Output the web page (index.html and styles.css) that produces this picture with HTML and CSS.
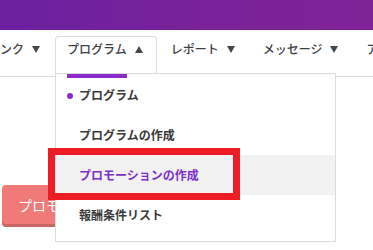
FILE: index.html
```html
<!DOCTYPE html>
<html lang="ja">
<head>
<meta charset="utf-8">
<link rel="stylesheet" href="styles.css">
</head>
<body>
<div class="page">
  <header class="topbar"></header>
  <nav class="nav">
    <div class="nav-item first">ンク<span class="caret down"></span></div>
    <div class="nav-item active">プログラム<span class="caret up"></span>
      <span class="tab-bar"></span>
      <ul class="dropdown">
        <li class="dd-item current"><span class="dot"></span>プログラム</li>
        <li class="dd-item">プログラムの作成</li>
        <li class="dd-item hover">プロモーションの作成</li>
        <li class="dd-item">報酬条件リスト</li>
      </ul>
    </div>
    <div class="nav-item">レポート<span class="caret down"></span></div>
    <div class="nav-item">メッセージ<span class="caret down"></span></div>
    <div class="nav-item">アカウント</div>
  </nav>
  <main class="content">
    <button class="btn">プロモーション作成</button>
  </main>
  <div class="annotation"></div>
</div>
</body>
</html>
```

FILE: styles.css
```css
* { box-sizing: border-box; }
html, body { margin: 0; padding: 0; background: #fff; }
body {
  font-family: "Noto Sans CJK JP", "Noto Sans", sans-serif;
  font-size: 12px;
  color: #3d4043;
}
.page {
  position: relative;
  width: 373px;
  height: 250px;
  overflow: hidden;
}
.topbar {
  height: 30px;
  background: linear-gradient(90deg, #6b20a0 0%, #7a2299 60%, #7f2398 100%);
}
.nav {
  display: flex;
  align-items: flex-start;
  height: 47px;
  border-bottom: 1px solid #dcdcdc;
  white-space: nowrap;
}
.nav-item {
  position: relative;
  flex: none;
  margin-top: 6px;
  padding: 0 13px 13px;
  line-height: 24px;
  border: 1px solid transparent;
  border-bottom: 0;
  font-weight: 500;
  color: #3d4043;
}
.nav-item.first {
  margin-left: -14px;
  padding-right: 14px;
}
.nav-item.active {
  padding-left: 11px;
  background: #fff;
  border-color: #dcdcdc;
  border-radius: 4px 4px 0 0;
  z-index: 3;
}
.caret {
  display: inline-block;
  width: 0;
  height: 0;
  margin-left: 8px;
  vertical-align: 1px;
  border-left: 4px solid transparent;
  border-right: 4px solid transparent;
}
.caret.down { border-top: 7px solid #44474a; }
.caret.up { border-bottom: 7px solid #44474a; }
.tab-bar {
  position: absolute;
  left: 11px;
  top: 37px;
  width: 60px;
  height: 4px;
  background: #8a2bcb;
  z-index: 4;
}
.dropdown {
  position: absolute;
  left: -1px;
  top: 36px;
  width: 281px;
  margin: 0;
  padding: 1px 0 6px;
  list-style: none;
  background: #fff;
  border: 1px solid #dcdcdc;
  z-index: -1;
}
.dd-item {
  height: 40px;
  line-height: 40px;
  padding-left: 23px;
  font-weight: 700;
  color: #3a3a3a;
}
.dd-item.hover {
  background: #f2f2f2;
  color: #7e31c9;
}
.dot {
  display: inline-block;
  width: 6px;
  height: 6px;
  margin-left: -12px;
  margin-right: 6px;
  border-radius: 50%;
  background: #8a2bd6;
  vertical-align: 1px;
}
.content {
  padding: 108px 0 0 2px;
}
.btn {
  display: block;
  height: 39px;
  padding: 0 16px;
  border: 0;
  border-radius: 4px;
  background: #f07a77;
  box-shadow: 0 3px 0 #c86764;
  color: #fff;
  font-family: "Noto Sans CJK JP", "Noto Sans", sans-serif;
  font-size: 14px;
  white-space: nowrap;
}
.annotation {
  position: absolute;
  left: 48px;
  top: 148px;
  width: 192px;
  height: 52px;
  border: 7px solid #ee1c25;
  z-index: 10;
}
```
